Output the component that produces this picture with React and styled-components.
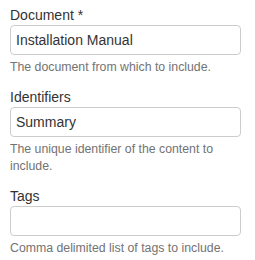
import React from 'react';
import styled, { createGlobalStyle } from 'styled-components';

const GlobalStyle = createGlobalStyle`
  html, body {
    margin: 0;
    padding: 0;
    background: #fff;
  }
  body {
    font-family: "Liberation Sans", Arial, sans-serif;
    font-size: 14px;
    line-height: 1.42857;
    color: #333;
  }
`;

const Form = styled.form`
  padding: 5px 14px 0 10px;
`;

const Group = styled.div`
  margin-bottom: 11px;
`;

const Label = styled.label`
  display: block;
  font-size: 14px;
  line-height: 20px;
  color: #333;
`;

const Input = styled.input`
  display: block;
  box-sizing: border-box;
  width: 100%;
  height: 30px;
  margin: 0;
  padding: 4px 5px;
  font-family: "Liberation Sans", Arial, sans-serif;
  font-size: 14px;
  color: #333;
  background: #fff;
  border: 1px solid #ccc;
  border-radius: 4px;
  outline: none;
`;

const Help = styled.p`
  margin: 4px 0 0;
  font-size: 12.3px;
  line-height: 17px;
  color: #737373;
`;

const fields = [
  { label: 'Document *', value: 'Installation Manual', help: 'The document from which to include.' },
  { label: 'Identifiers', value: 'Summary', help: 'The unique identifier of the content to include.' },
  { label: 'Tags', value: '', help: 'Comma delimited list of tags to include.' },
];

const App = () => (
  <>
    <GlobalStyle />
    <Form>
      {fields.map((f) => (
        <Group key={f.label}>
          <Label>{f.label}</Label>
          <Input defaultValue={f.value} />
          <Help>{f.help}</Help>
        </Group>
      ))}
    </Form>
  </>
);

export default App;
